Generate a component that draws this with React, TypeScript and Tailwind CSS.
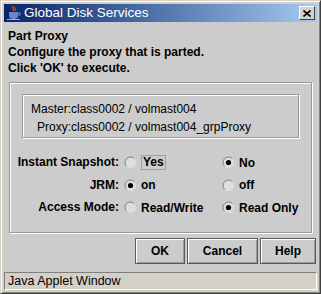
import React from "react";

// Java applet dialog: "Global Disk Services" / Part Proxy
function Radio({ checked }: { checked: boolean }) {
  return (
    <svg width="13" height="13" viewBox="0 0 13 13" className="shrink-0">
      <circle cx="6.5" cy="6.5" r="5.5" fill="#dedede" stroke="#7b7b7b" />
      <path d="M10.4 2.6 A5.5 5.5 0 0 1 2.6 10.4" fill="none" stroke="#ffffff" strokeWidth="1" />
      {checked && <circle cx="6.5" cy="6.5" r="2.6" fill="#000" />}
    </svg>
  );
}

function Option({ checked, label, focus }: { checked: boolean; label: string; focus?: boolean }) {
  return (
    <div className="flex items-center gap-[4px]">
      <Radio checked={checked} />
      <span className={focus ? "border border-[#9a9ad0] px-[1px] leading-[13px]" : "leading-[20px]"}>{label}</span>
    </div>
  );
}

function JavaCup() {
  return (
    <svg width="16" height="16" viewBox="0 0 16 16">
      <path d="M7 1 C5 3 9 4 7 6 M9 2 C8 3 10 4 9 6" stroke="#e0402a" strokeWidth="1.3" fill="none" />
      <path d="M3 7 H12 V11 C12 13 10 14 8 14 H7 C5 14 3 13 3 11 Z" fill="#6d84c4" />
      <path d="M12 8 H14 V10 H12" stroke="#6d84c4" strokeWidth="1.2" fill="none" />
      <path d="M1 14.5 H14" stroke="#9fb0e0" strokeWidth="1" />
    </svg>
  );
}

const btn =
  "h-[26px] border border-[#5a5a5a] bg-[#cccccc] shadow-[inset_1px_1px_0_#fff,inset_-1px_-1px_0_#9a9a9a] text-[12px] font-bold flex items-center justify-center";

export default function App() {
  return (
    <div
      className="w-[321px] h-[294px] bg-[#d4d0c8] border border-t-[#d4d0c8] border-l-[#d4d0c8] border-r-[#404040] border-b-[#404040] shadow-[inset_1px_1px_0_#fff,inset_-1px_-1px_0_#808080] p-[3px] flex flex-col text-black"
      style={{ fontFamily: '"Liberation Sans", Arial, sans-serif' }}
    >
      {/* title bar */}
      <div className="h-[18px] bg-gradient-to-r from-[#0a246a] to-[#a6caf0] flex items-center pl-[2px] pr-[2px]">
        <JavaCup />
        <span className="ml-[2px] text-white text-[13.5px] leading-[18px]">Global Disk Services</span>
        <div className="ml-auto w-[16px] h-[14px] bg-[#d4d0c8] border border-t-white border-l-white border-r-[#404040] border-b-[#404040] flex items-center justify-center">
          <svg width="8" height="7" viewBox="0 0 8 7">
            <path d="M0.5 0.5 L7.5 6.5 M7.5 0.5 L0.5 6.5" stroke="#000" strokeWidth="1.6" />
          </svg>
        </div>
      </div>

      {/* content */}
      <div className="flex-1 bg-[#cccccc] flex flex-col text-[12px] font-bold">
        <div className="pl-[4px] pt-[6px] leading-[16px]">
          <div>Part Proxy</div>
          <div>Configure the proxy that is parted.</div>
          <div>Click 'OK' to execute.</div>
        </div>

        <div className="mx-[5px] mt-[6px] h-[151px] border border-[#999] shadow-[inset_1px_1px_0_#fff,1px_1px_0_#fff] px-[12px] pt-[11px]">
          <div className="h-[44px] border border-[#999] shadow-[inset_1px_1px_0_#fff,1px_1px_0_#fff] pt-[6px] grid grid-cols-[48px_1fr] leading-[16px] font-normal">
            <span className="text-right">Master:</span>
            <span>class0002 / volmast004</span>
            <span className="text-right">Proxy:</span>
            <span>class0002 / volmast004_grpProxy</span>
          </div>

          <div className="mt-[14px] grid grid-cols-[109px_93px_1fr] auto-rows-[21px] gap-x-[5px] gap-y-[1.5px] -ml-[12px]">
            <span className="text-right leading-[21px] whitespace-nowrap">Instant Snapshot:</span>
            <Option checked={false} label="Yes" focus />
            <Option checked label="No" />
            <span className="text-right leading-[21px]">JRM:</span>
            <Option checked label="on" />
            <Option checked={false} label="off" />
            <span className="text-right leading-[21px]">Access Mode:</span>
            <Option checked={false} label="Read/Write" />
            <Option checked label="Read Only" />
          </div>
        </div>

        <div className="flex justify-end gap-[2px] mt-[5px] pr-[1px]">
          <div className={btn + " w-[50px]"}>OK</div>
          <div className={btn + " w-[71px]"}>Cancel</div>
          <div className={btn + " w-[56px]"}>Help</div>
        </div>

        <div className="mt-auto h-[18px] bg-[#d4d0c8] border border-t-[#808080] border-l-[#808080] border-r-white border-b-white text-[12.5px] font-normal leading-[16px] pl-[3px]">
          Java Applet Window
        </div>
      </div>
    </div>
  );
}
